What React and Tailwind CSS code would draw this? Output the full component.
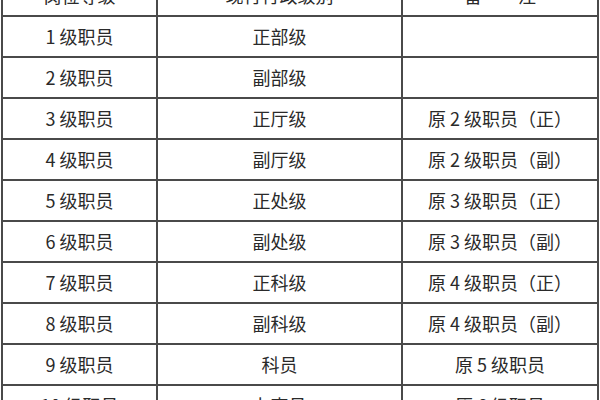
const rows = [
  ["1 级职员", "正部级", ""],
  ["2 级职员", "副部级", ""],
  ["3 级职员", "正厅级", "原 2 级职员（正）"],
  ["4 级职员", "副厅级", "原 2 级职员（副）"],
  ["5 级职员", "正处级", "原 3 级职员（正）"],
  ["6 级职员", "副处级", "原 3 级职员（副）"],
  ["7 级职员", "正科级", "原 4 级职员（正）"],
  ["8 级职员", "副科级", "原 4 级职员（副）"],
  ["9 级职员", "科员", "原 5 级职员"],
  ["10 级职员", "办事员", "原 6 级职员"],
]

const Row = ({ cells }) => (
  <div className="grid h-[41px] grid-cols-[155px_245px_1fr] border-b-2 border-[#4a4a4a]">
    {cells.map((c, i) => (
      <div
        key={i}
        className={`flex items-center justify-center whitespace-pre ${
          i < 2 ? "border-r-2 border-[#4a4a4a]" : ""
        }`}
      >
        {c}
      </div>
    ))}
  </div>
)

export default function App() {
  return (
    <div className="h-[400px] w-[600px] overflow-hidden bg-white">
      <div
        className="-mt-[26px] ml-[1px] w-[598px] border-2 border-b-0 border-[#4a4a4a] text-[18px] text-[#2a2a2a]"
        style={{ fontFamily: '"Noto Sans CJK SC", "Noto Sans", sans-serif' }}
      >
        <Row cells={["岗位等级", "现行行政级别", "备　　注"]} />
        {rows.map((r, i) => (
          <Row key={i} cells={r} />
        ))}
      </div>
    </div>
  )
}
